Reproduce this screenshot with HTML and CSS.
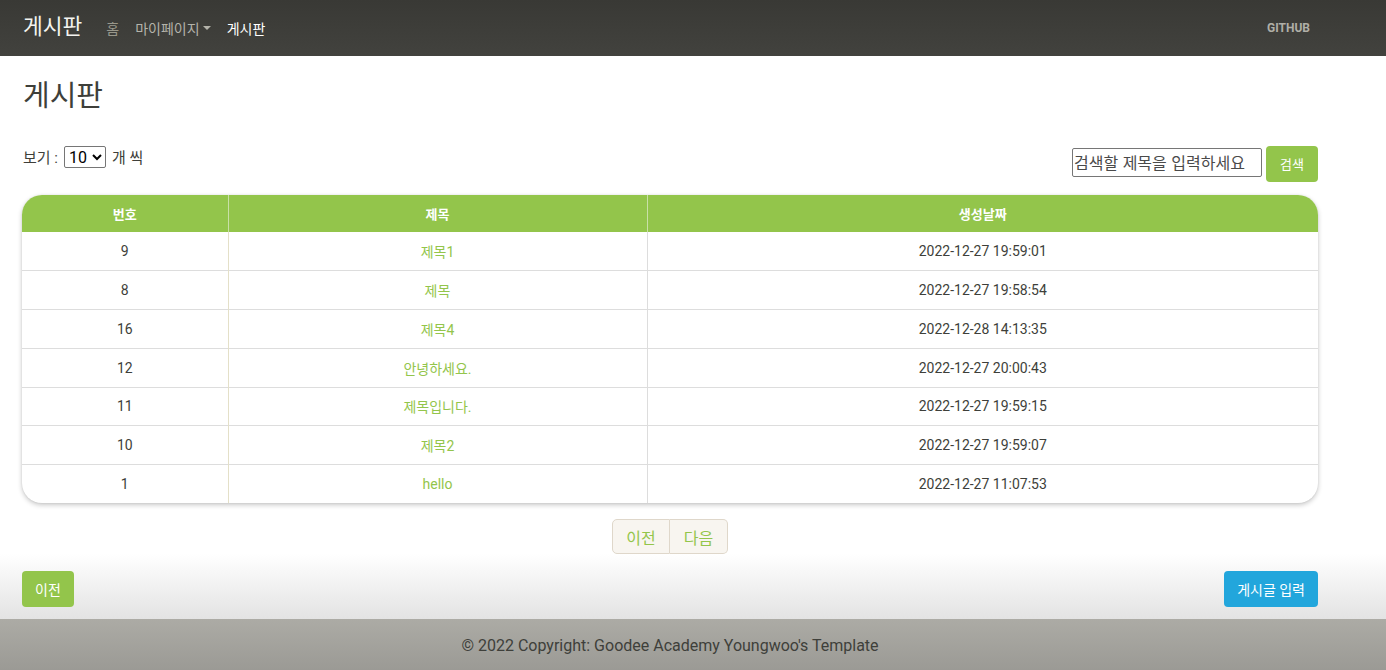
FILE: index.html
```html
<!DOCTYPE html>
<html lang="ko">
<head>
<meta charset="utf-8">
<title>게시판</title>
<link rel="stylesheet" href="styles.css">
</head>
<body>
<nav class="navbar">
  <div class="nav-inner">
    <a class="brand" href="#">게시판</a>
    <ul class="nav-links">
      <li><a class="nav-link" href="#">홈</a></li>
      <li><a class="nav-link light" href="#">마이페이지<span class="caret"></span></a></li>
      <li><a class="nav-link active" href="#">게시판</a></li>
    </ul>
    <a class="nav-right" href="#">GITHUB</a>
  </div>
</nav>

<main class="page">
  <h1 class="title">게시판</h1>
  <div class="controls">
    <div class="per-page">
      <span>보기 :</span>
      <select class="select"><option>10</option></select>
      <span>개 씩</span>
    </div>
    <form class="search">
      <input class="search-input" type="text" placeholder="검색할 제목을 입력하세요">
      <button class="btn btn-success btn-search" type="button">검색</button>
    </form>
  </div>

  <div class="table-card">
    <table class="board">
      <thead>
        <tr><th class="c-no">번호</th><th class="c-title">제목</th><th class="c-date">생성날짜</th></tr>
      </thead>
      <tbody>
        <tr><td>9</td><td><a href="#">제목1</a></td><td>2022-12-27 19:59:01</td></tr>
        <tr><td>8</td><td><a href="#">제목</a></td><td>2022-12-27 19:58:54</td></tr>
        <tr><td>16</td><td><a href="#">제목4</a></td><td>2022-12-28 14:13:35</td></tr>
        <tr><td>12</td><td><a href="#">안녕하세요.</a></td><td>2022-12-27 20:00:43</td></tr>
        <tr><td>11</td><td><a href="#">제목입니다.</a></td><td>2022-12-27 19:59:15</td></tr>
        <tr><td>10</td><td><a href="#">제목2</a></td><td>2022-12-27 19:59:07</td></tr>
        <tr><td>1</td><td><a href="#">hello</a></td><td>2022-12-27 11:07:53</td></tr>
      </tbody>
    </table>
  </div>

  <div class="pager">
    <a class="pager-btn" href="#">이전</a><a class="pager-btn" href="#">다음</a>
  </div>
</main>

<section class="actions">
  <div class="actions-inner">
    <a class="btn btn-success" href="#">이전</a>
    <a class="btn btn-info" href="#">게시글 입력</a>
  </div>
</section>

<footer class="footer">
  <div class="footer-inner">© 2022 Copyright: Goodee Academy Youngwoo's Template</div>
</footer>
</body>
</html>
```

FILE: styles.css
```css
* { box-sizing: border-box; }

html, body {
  margin: 0;
  padding: 0;
}

body {
  font-family: Roboto, "Noto Sans CJK KR", "Noto Sans", sans-serif;
  font-size: 14px;
  color: #3e3f3a;
  background: #fff;
}

a { text-decoration: none; }

/* Navbar */
.navbar {
  height: 56px;
  background: linear-gradient(#393935, #42423e);
}

.nav-inner {
  width: 1340px;
  height: 56px;
  display: flex;
  align-items: center;
  padding: 0 30px 0 23px;
}

.brand {
  font-size: 21.5px;
  color: #f4f4f0;
  margin-right: 24px;
  line-height: 1;
  padding-bottom: 3px;
}

.nav-links {
  display: flex;
  list-style: none;
  margin: 0;
  padding: 0;
}

.nav-link {
  font-size: 14px;
  color: #98978b;
  margin-right: 16px;
  display: inline-flex;
  align-items: center;
  padding-bottom: 1px;
}

.nav-link.light { color: #b4b3aa; }
.nav-link.active { color: #ffffff; }

.caret {
  display: inline-block;
  width: 0;
  height: 0;
  margin-left: 3px;
  border-left: 4px solid transparent;
  border-right: 4px solid transparent;
  border-top: 4px solid #b4b3aa;
}

.nav-right {
  margin-left: auto;
  font-size: 12px;
  font-weight: 700;
  color: #b0afa7;
}

/* Page */
.page {
  width: 1340px;
  padding: 0 22px;
}

.title {
  font-size: 29px;
  font-weight: 400;
  line-height: 1.1;
  margin: 25px 0 0 1px;
  color: #3e3f3a;
}

.controls {
  display: flex;
  justify-content: space-between;
  align-items: flex-start;
  margin-top: 33px;
}

.per-page {
  display: flex;
  align-items: center;
  gap: 6px;
  font-size: 15px;
  height: 22px;
  padding-left: 1px;
}

.select {
  font-family: Roboto, "Liberation Sans", sans-serif;
  font-size: 16px;
  height: 22px;
  width: 42px;
  padding: 0;
  border: 1px solid #767676;
  border-radius: 2px;
  background: #fff;
  color: #000;
}

.search {
  display: flex;
  align-items: flex-start;
  gap: 4px;
  margin: 0;
}

.search-input {
  width: 190px;
  height: 29px;
  margin-top: 2px;
  font-family: "Noto Sans CJK KR", sans-serif;
  font-size: 16px;
  padding: 0 1px;
  border: 1px solid #767676;
  border-radius: 2px;
}

.search-input::placeholder { color: #4a4a4a; }

.btn {
  display: inline-flex;
  align-items: center;
  justify-content: center;
  height: 36px;
  padding: 0 13px;
  border: 0;
  border-radius: 4px;
  color: #fff;
  font-family: Roboto, "Noto Sans CJK KR", sans-serif;
  font-size: 14px;
}

.btn-success { background: #93c54b; }
.btn-info { background: #22a6dc; }
.btn-search { width: 52px; padding: 0; font-size: 13px; }

/* Table */
.table-card {
  margin-top: 13px;
  border-radius: 20px;
  overflow: hidden;
  box-shadow: 0 2px 5px rgba(0, 0, 0, 0.22), 0 0 2px rgba(0, 0, 0, 0.08);
  background: #fff;
}

.board {
  width: 100%;
  border-collapse: collapse;
  font-size: 14px;
  text-align: center;
}

.board th {
  background: #93c54b;
  color: #fff;
  font-size: 13px;
  font-weight: 700;
  height: 37px;
  padding: 0;
  border-left: 1px solid #c9e0a7;
}

.board th:first-child { border-left: 0; }

.c-no { width: 206px; }
.c-title { width: 419px; }

.board td {
  height: 38.8px;
  padding: 0;
  border-top: 1px solid #dddddd;
  border-left: 1px solid #dddddd;
  color: #3e3f3a;
}

.board tbody tr:first-child td { border-top: 0; }
.board td:first-child { border-left: 0; }
.board td:nth-child(2) { border-left-color: #e4e0c8; }

.board td a { color: #93c54b; }

/* Pager */
.pager {
  display: flex;
  justify-content: center;
  margin-top: 16px;
}

.pager-btn {
  display: inline-flex;
  align-items: center;
  justify-content: center;
  height: 35px;
  padding: 0 12px;
  background: #f8f5f0;
  border: 1px solid #dfd7ca;
  color: #93c54b;
  font-size: 16px;
}

.pager-btn:first-child {
  border-radius: 5px 0 0 5px;
  width: 58px;
}

.pager-btn:last-child {
  border-left: 0;
  border-radius: 0 5px 5px 0;
  width: 58px;
}

/* Bottom actions */
.actions {
  background: linear-gradient(#ffffff, #e3e3e3);
  padding: 17px 0 12px;
}

.actions-inner {
  width: 1340px;
  padding: 0 22px;
  display: flex;
  justify-content: space-between;
}

/* Footer */
.footer {
  height: 51px;
  background: linear-gradient(#acaba5, #9b9a95);
}

.footer-inner {
  width: 1340px;
  height: 51px;
  display: flex;
  align-items: center;
  justify-content: center;
  font-size: 16px;
  color: #3e3f3a;
  padding-top: 2px;
}
```
